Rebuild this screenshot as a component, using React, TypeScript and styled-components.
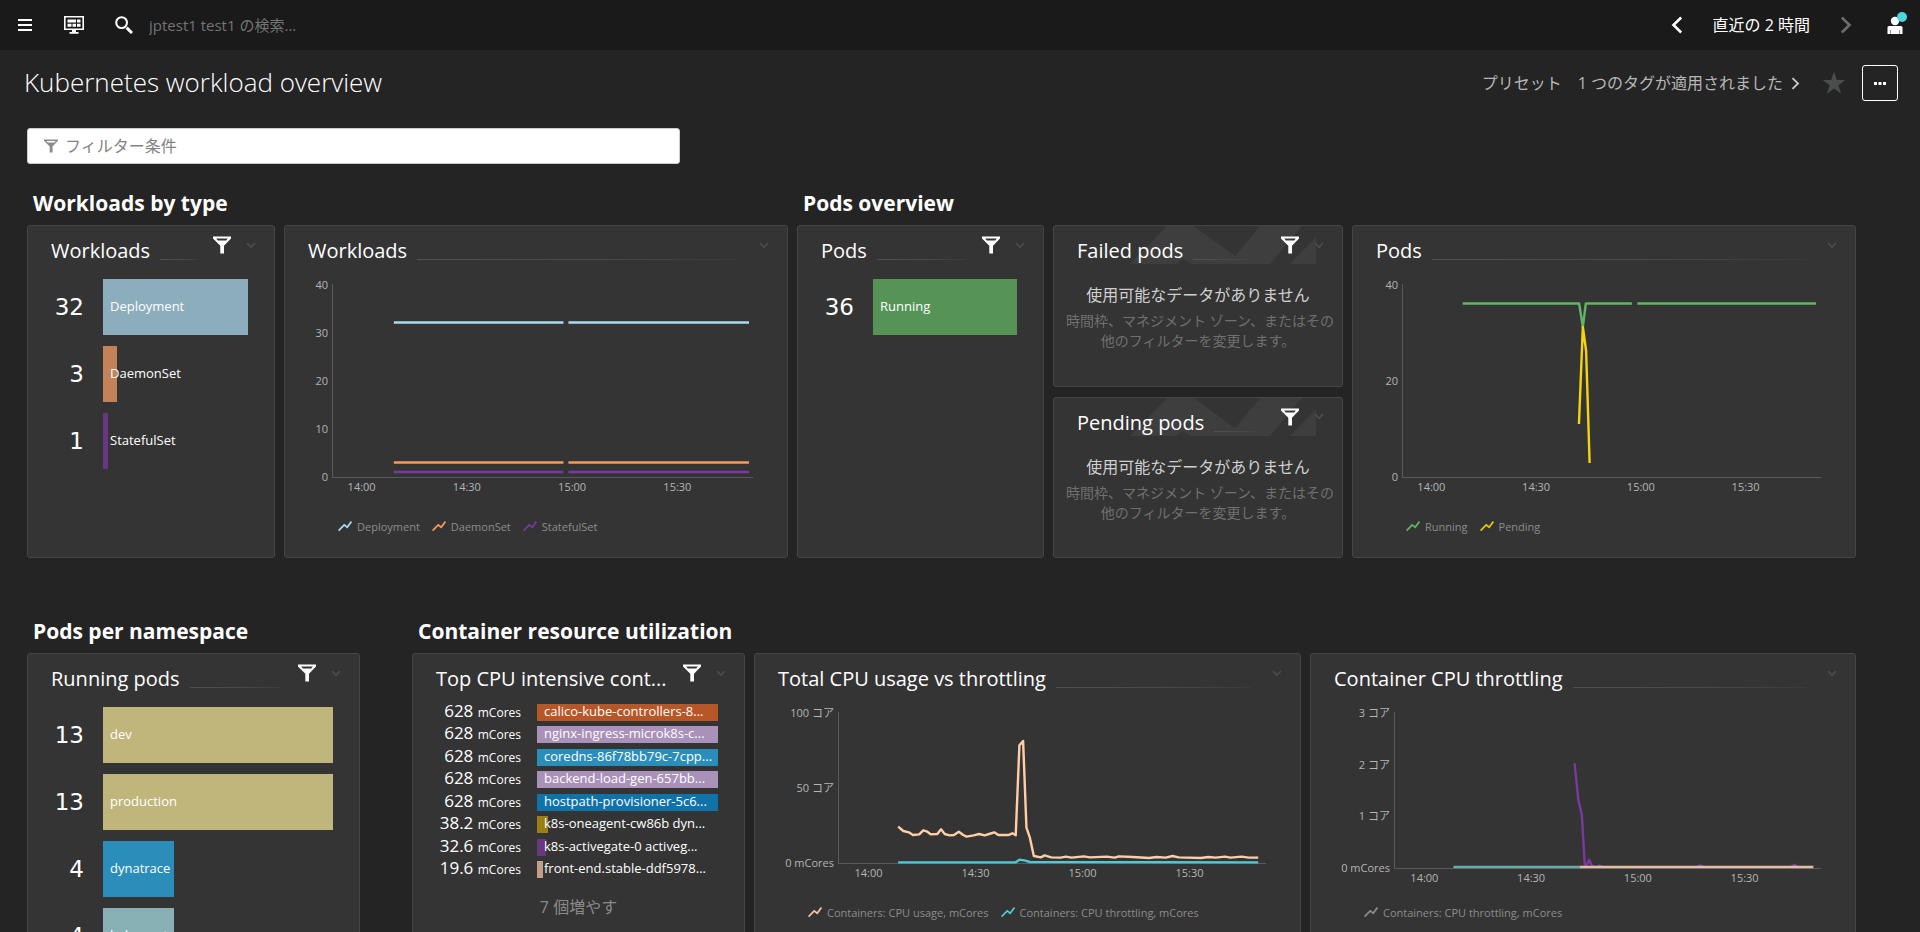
import React from "react";
import styled, { createGlobalStyle } from "styled-components";

const GlobalStyle = createGlobalStyle`
  *, *::before, *::after { box-sizing: border-box; }
  body {
    margin: 0;
    background: #242424;
    color: #fff;
    font-family: "Open Sans", "Noto Sans CJK JP", sans-serif;
    font-size: 14px;
  }
  button, input { font: inherit; color: inherit; }
  h1, h2, h3, p, ul { margin: 0; padding: 0; }
`;

/* ---------- shell ---------- */

const Shell = styled.div`
  display: flex;
  flex-direction: column;
  height: 100vh;
  overflow: hidden;
`;

const TopBar = styled.header`
  display: flex;
  align-items: center;
  flex: none;
  height: 50px;
  padding: 0 16px 0 14px;
  background: #1a1a1a;
`;

const IconButton = styled.button`
  display: flex;
  align-items: center;
  justify-content: center;
  flex: none;
  padding: 0;
  border: 0;
  background: none;
  cursor: pointer;
`;

const MenuButton = styled(IconButton)`
  width: 22px;
  height: 32px;
`;

const DashboardsButton = styled(IconButton)`
  width: 24px;
  height: 32px;
  margin-left: 26px;
`;

const SearchField = styled.label`
  display: flex;
  align-items: center;
  flex: 1;
  gap: 16px;
  margin-left: 29px;
`;

const SearchInput = styled.input`
  flex: 1;
  min-width: 0;
  padding: 0;
  border: 0;
  outline: 0;
  background: none;
  font-size: 15px;
  line-height: 20px;
  &::placeholder { color: #747474; opacity: 1; }
`;

const TimeFrame = styled.div`
  display: flex;
  align-items: center;
  gap: 26px;
`;

const TimeButton = styled(IconButton)`
  font-size: 16px;
  line-height: 24px;
`;

const StepButton = styled(IconButton)`
  width: 20px;
  height: 32px;
`;

const UserButton = styled(IconButton)`
  position: relative;
  width: 18px;
  height: 32px;
  margin-left: 30px;
`;

const Notification = styled.span`
  position: absolute;
  top: 3px;
  right: -3px;
  width: 10px;
  height: 10px;
  border-radius: 50%;
  background: #4fd5e0;
`;

const Content = styled.main`
  flex: 1;
  min-height: 0;
  overflow-y: auto;
  scrollbar-width: none;
`;

const TitleBar = styled.div`
  display: flex;
  align-items: center;
  justify-content: space-between;
  height: 66px;
  padding: 0 22px 0 24px;
`;

const PageTitle = styled.h1`
  padding-bottom: 2px;
  font-size: 26px;
  line-height: 36px;
  font-weight: 300;
`;

const TitleActions = styled.div`
  display: flex;
  align-items: center;
`;

const TextLink = styled.a`
  display: flex;
  align-items: center;
  gap: 6px;
  margin-right: 16px;
  color: #b7b7b7;
  font-size: 16px;
  line-height: 24px;
  text-decoration: none;
`;

const FavoriteButton = styled(IconButton)`
  width: 24px;
  height: 24px;
  margin: 0 16px 0 4px;
`;

const MoreButton = styled(IconButton)`
  width: 36px;
  height: 36px;
  border: 1px solid #fff;
  border-radius: 3px;
`;

const Board = styled.div`
  padding: 12px 64px 0 27px;
`;

const FilterField = styled.label`
  display: flex;
  align-items: center;
  gap: 7px;
  width: 653px;
  max-width: 100%;
  height: 36px;
  padding: 0 16px;
  border: 1px solid #ccc;
  border-radius: 3px;
  background: #fff;
`;

const FilterInput = styled.input`
  flex: 1;
  min-width: 0;
  padding: 0;
  border: 0;
  outline: 0;
  background: none;
  color: #333;
  font-size: 16px;
  line-height: 24px;
  &::placeholder { color: #838383; opacity: 1; }
`;

/* ---------- board grid ---------- */

const BoardRow = styled.div<{ $columns: string; $gap: number; $top: number }>`
  display: grid;
  grid-template-columns: ${(p) => p.$columns};
  column-gap: ${(p) => p.$gap}px;
  margin-top: ${(p) => p.$top}px;
`;

const SectionTitle = styled.h2`
  margin-bottom: 7px;
  padding-left: 6px;
  font-size: 21px;
  line-height: 30px;
  font-weight: 700;
`;

const TileGrid = styled.div<{ $columns: string }>`
  display: grid;
  grid-template-columns: ${(p) => p.$columns};
  gap: 9px;
`;

const TileStack = styled.div`
  display: grid;
  grid-template-rows: 1fr 1fr;
  gap: 10px;
`;

const TileBox = styled.article<{ $tall?: boolean }>`
  position: relative;
  min-width: 0;
  min-height: ${(p) => (p.$tall ? "333px" : "0")};
  border: 1px solid #454545;
  border-radius: 3px;
  background: #343434;
`;

const TileHeader = styled.div`
  position: relative;
  display: flex;
  height: 40px;
  padding: 10px 18px 0 23px;
`;

const TileTitle = styled.h3`
  flex: none;
  font-size: 20px;
  line-height: 30px;
  font-weight: 400;
  white-space: nowrap;
`;

const TitleRule = styled.span`
  flex: 1;
  height: 1px;
  margin: 23px 0 0 10px;
  background: linear-gradient(90deg, #505050, #484848 60%, #3a3a3a);
`;

const TileFilterButton = styled(IconButton)`
  width: 18px;
  height: 18px;
  margin-left: 16px;
`;

const TileMenuButton = styled(IconButton)<{ $wide: boolean }>`
  width: 10px;
  height: 18px;
  margin-left: ${(p) => (p.$wide ? 21 : 15)}px;
`;

const Watermark = styled.svg`
  position: absolute;
  top: 0;
  left: 0;
  width: 100%;
  height: 38px;
`;

/* ---------- bar lists ---------- */

const BarList = styled.ul`
  display: flex;
  flex-direction: column;
  gap: 11px;
  padding: 13px 26px 0 0;
  list-style: none;
`;

const BarItem = styled.li`
  display: grid;
  grid-template-columns: 56px 1fr;
  column-gap: 19px;
  align-items: center;
  height: 56px;
`;

const BigValue = styled.span`
  font-family: "DejaVu Sans", sans-serif;
  font-size: 23px;
  line-height: 28px;
  text-align: right;
`;

const BarTrack = styled.div`
  display: grid;
  align-items: center;
  height: 100%;
  min-width: 0;
`;

const BarFill = styled.span<{ $color: string }>`
  grid-area: 1 / 1;
  height: 100%;
  background: ${(p) => p.$color};
`;

const BarLabel = styled.span`
  grid-area: 1 / 1;
  padding: 0 0 2px 7px;
  font-size: 13px;
  line-height: 15px;
  font-weight: 500;
  white-space: nowrap;
`;

const CompactList = styled.ul`
  display: flex;
  flex-direction: column;
  justify-content: space-between;
  height: 174px;
  margin: 10px 26px 0 0;
  list-style: none;
`;

const CompactItem = styled.li`
  display: grid;
  grid-template-columns: 108px 1fr;
  column-gap: 16px;
  height: 17px;
`;

const SmallValue = styled.span`
  font-size: 17px;
  line-height: 14px;
  text-align: right;
  white-space: nowrap;
`;

const Unit = styled.small`
  font-size: 12px;
  font-weight: 500;
`;

const ShowMore = styled.button`
  display: block;
  margin: 17px auto 0;
  padding: 0;
  border: 0;
  background: none;
  color: #8a8a8a;
  font-size: 16px;
  line-height: 24px;
  cursor: pointer;
`;

/* ---------- empty state ---------- */

const EmptyState = styled.div`
  padding: 17px 12px 34px;
  text-align: center;
`;

const EmptyTitle = styled.p`
  color: #cfcfcf;
  font-size: 16px;
  line-height: 24px;
`;

const EmptyHint = styled.p`
  margin-top: 4px;
  color: #707070;
  font-size: 14px;
  line-height: 20px;
  white-space: nowrap;
`;

/* ---------- charts ---------- */

const ChartGrid = styled.div<{ $axis: number; $height: number; $after: number }>`
  display: grid;
  grid-template-columns: ${(p) => p.$axis}px 1fr;
  grid-template-rows: ${(p) => p.$height}px 16px;
  row-gap: 1px;
  margin: 18px 34px ${(p) => p.$after}px 0;
  color: #b4b4b4;
  font-size: 11px;
  line-height: 16px;
`;

const YAxis = styled.div`
  display: flex;
  flex-direction: column;
  justify-content: space-between;
  margin: -7px 0;
  padding-right: 4px;
  text-align: right;
`;

const Plot = styled.div`
  min-width: 0;
  border-left: 1px solid #5a5a5a;
  border-bottom: 1px solid #5a5a5a;
`;

const Lines = styled.svg`
  display: block;
  width: 100%;
  height: 100%;
  overflow: visible;
  fill: none;
  stroke-width: 2.4;
  stroke-linejoin: round;
`;

const XAxis = styled.div`
  grid-column: 2;
  display: grid;
  grid-template-columns: repeat(4, 25%);
  margin-left: -23px;
  width: 100%;
  text-align: center;
`;

const Legend = styled.ul`
  display: flex;
  gap: 12px;
  padding: 0 0 0 53px;
  color: #8c8c8c;
  font-size: 11px;
  line-height: 16px;
  list-style: none;
`;

const LegendItem = styled.li`
  display: flex;
  align-items: center;
  gap: 5px;
  white-space: nowrap;
`;

/* ---------- icons ---------- */

const Funnel = ({ color, size }: { color: string; size: number }) => (
  <svg width={size} height={size} viewBox="0 0 18 18" aria-hidden="true">
    <path
      fill={color}
      fillRule="evenodd"
      d="M0 .6h18v1.800l-7 7.400v7.700H7.300V9.800L0 2.400zM3.200 2.600l1.600 1.800h8.400l1.600-1.800z"
    />
  </svg>
);

const ChevronDown = () => (
  <svg width="10" height="7" viewBox="0 0 10 7" fill="none" stroke="#4c4c4c" strokeWidth="1.6" aria-hidden="true">
    <path d="M1 1l4 4.4L9 1" />
  </svg>
);

const Chevron = ({ dir, color, size }: { dir: "left" | "right"; color: string; size: number }) => (
  <svg width={size} height={size} viewBox="0 0 18 18" fill="none" stroke={color} strokeWidth="2.6" aria-hidden="true">
    <path d={dir === "left" ? "M13.2 1.5L5.5 9l7.7 7.5" : "M4.8 1.5L12.5 9l-7.7 7.5"} />
  </svg>
);

const Spark = ({ color }: { color: string }) => (
  <svg width="14" height="12" viewBox="0 0 14 12" fill="none" stroke={color} strokeWidth="1.7" aria-hidden="true">
    <path d="M.6 9.600L6.200 3.800l3 2.400L13.400.6" />
  </svg>
);

/* ---------- parts ---------- */

type TileProps = {
  title: string;
  filter?: boolean;
  rule?: boolean;
  watermark?: boolean;
  tall?: boolean;
  children: React.ReactNode;
};

const Tile = ({ title, filter = false, rule = true, watermark = false, tall = false, children }: TileProps) => (
  <TileBox $tall={tall}>
    {watermark && (
      <Watermark viewBox="0 0 290 38" preserveAspectRatio="xMidYMin slice" fill="#3e3e3e" aria-hidden="true">
        <path d="M77 38L114 0h27l41 30 25-30h42l-32 38h-79l-8-5-7 5zM237 38l26-27v27z" />
      </Watermark>
    )}
    <TileHeader>
      <TileTitle>{title}</TileTitle>
      {rule && <TitleRule />}
      {filter && (
        <TileFilterButton aria-label={`Filter ${title}`}>
          <Funnel color="#fff" size={18} />
        </TileFilterButton>
      )}
      <TileMenuButton $wide={!filter} aria-label={`Open ${title} menu`}>
        <ChevronDown />
      </TileMenuButton>
    </TileHeader>
    {children}
  </TileBox>
);

type Bar = { value: string; label: string; share: number; color: string };

const Bars = ({ items }: { items: Bar[] }) => (
  <BarList>
    {items.map((b) => (
      <BarItem key={b.label}>
        <BigValue>{b.value}</BigValue>
        <BarTrack>
          <BarFill $color={b.color} style={{ width: `${b.share}%` }} />
          <BarLabel>{b.label}</BarLabel>
        </BarTrack>
      </BarItem>
    ))}
  </BarList>
);

const NoData = () => (
  <EmptyState>
    <EmptyTitle>使用可能なデータがありません</EmptyTitle>
    <EmptyHint>
      時間枠、マネジメント ゾーン、またはその
      <br />
      他のフィルターを変更します。
    </EmptyHint>
  </EmptyState>
);

type Series = { color: string; d: string };
type ChartProps = {
  axis: number;
  height: number;
  after: number;
  ticks: string[];
  viewBox: string;
  series: Series[];
  legend: { color: string; label: string }[];
};

const times = ["14:00", "14:30", "15:00", "15:30"];

const Chart = ({ axis, height, after, ticks, viewBox, series, legend }: ChartProps) => (
  <>
    <ChartGrid $axis={axis} $height={height} $after={after}>
      <YAxis>
        {ticks.map((t) => (
          <span key={t}>{t}</span>
        ))}
      </YAxis>
      <Plot>
        <Lines viewBox={viewBox} preserveAspectRatio="none" aria-hidden="true">
          {series.map((s, i) => (
            <path key={i} d={s.d} stroke={s.color} vectorEffect="non-scaling-stroke" />
          ))}
        </Lines>
      </Plot>
      <XAxis>
        {times.map((t) => (
          <span key={t}>{t}</span>
        ))}
      </XAxis>
    </ChartGrid>
    <Legend>
      {legend.map((l) => (
        <LegendItem key={l.label}>
          <Spark color={l.color} />
          {l.label}
        </LegendItem>
      ))}
    </Legend>
  </>
);

/* ---------- data ---------- */

const workloads: Bar[] = [
  { value: "32", label: "Deployment", share: 100, color: "#8cadbc" },
  { value: "3", label: "DaemonSet", share: 9.6, color: "#c28359" },
  { value: "1", label: "StatefulSet", share: 3.4, color: "#693681" },
];

const podStates: Bar[] = [{ value: "36", label: "Running", share: 100, color: "#559456" }];

const namespaces: Bar[] = [
  { value: "13", label: "dev", share: 100, color: "#c0b67c" },
  { value: "13", label: "production", share: 100, color: "#c0b67c" },
  { value: "4", label: "dynatrace", share: 30.8, color: "#2b8dba" },
  { value: "4", label: "kube-system", share: 30.8, color: "#87b1b5" },
];

const containers: Bar[] = [
  { value: "628", label: "calico-kube-controllers-8...", share: 100, color: "#b75627" },
  { value: "628", label: "nginx-ingress-microk8s-c...", share: 100, color: "#a991b9" },
  { value: "628", label: "coredns-86f78bb79c-7cpp...", share: 100, color: "#2b8dba" },
  { value: "628", label: "backend-load-gen-657bb...", share: 100, color: "#a991b9" },
  { value: "628", label: "hostpath-provisioner-5c6...", share: 100, color: "#0f72a9" },
  { value: "38.2", label: "k8s-oneagent-cw86b dyn...", share: 6, color: "#9c7f14" },
  { value: "32.6", label: "k8s-activegate-0 activeg...", share: 5, color: "#693681" },
  { value: "19.6", label: "front-end.stable-ddf5978...", share: 3.3, color: "#c29f86" },
];

const flat = (y: number) => `M61 ${y}H231M236 ${y}H417`;

const workloadSeries: Series[] = [
  { color: "#a9dbf0", d: flat(38.5) },
  { color: "#f19b5f", d: flat(178.5) },
  { color: "#7c38a1", d: flat(188) },
];

const podSeries: Series[] = [
  { color: "#62b562", d: "M60 19.5H177L180.7 43L183.7 19.5H230M235.5 19.5H415" },
  { color: "#f5d30f", d: "M176.8 140L180.7 43L184 67L187.5 179" },
];

const cpuSeries: Series[] = [
  {
    color: "#ffcda6",
    d: "M426 560L440 573 455 577 466 585 483 583 494 571 503 574 514 583 532 582 542 568 552 582 565 586 577 585 590 575 602 585 611 590 630 586 645 582 660 586 672 582 686 577 697 585 725 585 735 580 744 586 754 316 764 303 773 563 782 592 793 648 812 652 822 646 840 652 865 653 880 650 895 653 928 649 945 652 990 650 1012 653 1023 649 1060 651 1105 654 1125 651 1150 653 1168 648 1185 652 1245 654 1265 651 1285 653 1310 650 1325 653 1355 650 1375 653 1400 653",
  },
  { color: "#4fc9d6", d: "M426 667H744L754 659 770 662 782 666 1400 667" },
];

const throttlingSeries: Series[] = [
  { color: "#7c38a1", d: "M717 370L727 480 736 525 744 678 748 678 755 659 763 679 775 681 782 677 790 681M1036 681L1046 676 1056 681M1282 681L1292 674 1302 681" },
  { color: "#69a9ab", d: "M400 681H730" },
  { color: "#e2bfa4", d: "M730 681H1342" },
];

/* ---------- page ---------- */

export default function App() {
  return (
    <Shell>
      <GlobalStyle />
      <TopBar>
        <MenuButton aria-label="Menu">
          <svg width="14" height="12" viewBox="0 0 14 12" fill="#fff" aria-hidden="true">
            <path d="M0 0h14v2H0zM0 5h14v2H0zM0 10h14v2H0z" />
          </svg>
        </MenuButton>
        <DashboardsButton aria-label="Dashboards">
          <svg width="20" height="18" viewBox="0 0 20 18" fill="#fff" aria-hidden="true">
            <path
              fillRule="evenodd"
              d="M0 0h20v14h-8v2h2.500v1.800h-9V16H8v-2H0zM1.600 1.600v10.800h16.800V1.600zM3.500 3.500h8.500v3H3.500zM13 3.500h3.500v3H13zM3.500 7.700h4v3h-4zM8.500 7.700h3.500v3H8.500zM13 7.700h3.500v3H13z"
            />
          </svg>
        </DashboardsButton>
        <SearchField>
          <svg width="18" height="18" viewBox="0 0 18 18" fill="none" stroke="#fff" aria-hidden="true">
            <circle cx="6.600" cy="6.600" r="5.400" strokeWidth="2" />
            <path d="M11.600 11.600L17 17" strokeWidth="3" />
          </svg>
          <SearchInput type="search" aria-label="検索" placeholder="jptest1 test1 の検索..." />
        </SearchField>
        <TimeFrame>
          <StepButton aria-label="Previous">
            <Chevron dir="left" color="#fff" size={18} />
          </StepButton>
          <TimeButton>直近の 2 時間</TimeButton>
          <StepButton aria-label="Next">
            <Chevron dir="right" color="#6c6c6c" size={18} />
          </StepButton>
        </TimeFrame>
        <UserButton aria-label="User">
          <svg width="16" height="18" viewBox="0 0 16 18" fill="#fff" aria-hidden="true">
            <circle cx="8" cy="5" r="4.200" />
            <path d="M2 10h12q1.500 0 1.500 1.500V18H.5v-6.500Q.5 10 2 10z" />
            <path d="M3.500 14v4M12.500 14v4" stroke="#777" strokeWidth=".8" />
          </svg>
          <Notification />
        </UserButton>
      </TopBar>

      <Content>
        <TitleBar>
          <PageTitle>Kubernetes workload overview</PageTitle>
          <TitleActions>
            <TextLink href="#presets">プリセット</TextLink>
            <TextLink href="#tags">
              1 つのタグが適用されました
              <Chevron dir="right" color="#c8c8c8" size={13} />
            </TextLink>
            <FavoriteButton aria-label="Favorite">
              <svg width="24" height="24" viewBox="0 0 24 24" fill="#4b4d4d" aria-hidden="true">
                <path d="M12 .8l2.800 8.300h8.500l-6.900 5.100 2.700 8.600L12 17.600l-7.100 5.200 2.700-8.600L.7 9.100h8.500z" />
              </svg>
            </FavoriteButton>
            <MoreButton aria-label="More">
              <svg width="12" height="3" viewBox="0 0 12 3" fill="#fff" aria-hidden="true">
                <path d="M0 0h3v3H0zM4.500 0h3v3h-3zM9 0h3v3H9z" />
              </svg>
            </MoreButton>
          </TitleActions>
        </TitleBar>

        <Board>
          <FilterField>
            <Funnel color="#8c8c8c" size={14} />
            <FilterInput type="text" aria-label="フィルター条件" placeholder="フィルター条件" />
          </FilterField>

          <BoardRow $columns="761fr 1059fr" $gap={9} $top={24}>
            <section>
              <SectionTitle>Workloads by type</SectionTitle>
              <TileGrid $columns="248fr 504fr">
                <Tile title="Workloads" filter tall>
                  <Bars items={workloads} />
                </Tile>
                <Tile title="Workloads" tall>
                  <Chart
                    axis={47}
                    height={194}
                    after={24}
                    ticks={["40", "30", "20", "10", "0"]}
                    viewBox="0 0 421 193"
                    series={workloadSeries}
                    legend={[
                      { color: "#a9dbf0", label: "Deployment" },
                      { color: "#f19b5f", label: "DaemonSet" },
                      { color: "#7c38a1", label: "StatefulSet" },
                    ]}
                  />
                </Tile>
              </TileGrid>
            </section>
            <section>
              <SectionTitle>Pods overview</SectionTitle>
              <TileGrid $columns="247fr 290fr 504fr">
                <Tile title="Pods" filter tall>
                  <Bars items={podStates} />
                </Tile>
                <TileStack>
                  <Tile title="Failed pods" filter watermark>
                    <NoData />
                  </Tile>
                  <Tile title="Pending pods" filter watermark>
                    <NoData />
                  </Tile>
                </TileStack>
                <Tile title="Pods" tall>
                  <Chart
                    axis={49}
                    height={194}
                    after={24}
                    ticks={["40", "20", "0"]}
                    viewBox="0 0 420 193"
                    series={podSeries}
                    legend={[
                      { color: "#62b562", label: "Running" },
                      { color: "#e6c514", label: "Pending" },
                    ]}
                  />
                </Tile>
              </TileGrid>
            </section>
          </BoardRow>

          <BoardRow $columns="333fr 1444fr" $gap={52} $top={58}>
            <section>
              <SectionTitle>Pods per namespace</SectionTitle>
              <TileGrid $columns="1fr">
                <Tile title="Running pods" filter tall>
                  <Bars items={namespaces} />
                </Tile>
              </TileGrid>
            </section>
            <section>
              <SectionTitle>Container resource utilization</SectionTitle>
              <TileGrid $columns="333fr 547fr 546fr">
                <Tile title="Top CPU intensive cont..." filter rule={false} tall>
                  <CompactList>
                    {containers.map((c) => (
                      <CompactItem key={c.label}>
                        <SmallValue>
                          {c.value} <Unit>mCores</Unit>
                        </SmallValue>
                        <BarTrack>
                          <BarFill $color={c.color} style={{ width: `${c.share}%` }} />
                          <BarLabel>{c.label}</BarLabel>
                        </BarTrack>
                      </CompactItem>
                    ))}
                  </CompactList>
                  <ShowMore>7 個増やす</ShowMore>
                </Tile>
                <Tile title="Total CPU usage vs throttling" tall>
                  <Chart
                    axis={83}
                    height={152}
                    after={24}
                    ticks={["100 コア", "50 コア", "0 mCores"]}
                    viewBox="266 216 1155 453"
                    series={cpuSeries}
                    legend={[
                      { color: "#f5c6a0", label: "Containers: CPU usage, mCores" },
                      { color: "#4fc9d6", label: "Containers: CPU throttling, mCores" },
                    ]}
                  />
                </Tile>
                <Tile title="Container CPU throttling" tall>
                  <Chart
                    axis={83}
                    height={157}
                    after={19}
                    ticks={["3 コア", "2 コア", "1 コア", "0 mCores"]}
                    viewBox="247 216 1115 468"
                    series={throttlingSeries}
                    legend={[{ color: "#8c8c8c", label: "Containers: CPU throttling, mCores" }]}
                  />
                </Tile>
              </TileGrid>
            </section>
          </BoardRow>
        </Board>
      </Content>
    </Shell>
  );
}
